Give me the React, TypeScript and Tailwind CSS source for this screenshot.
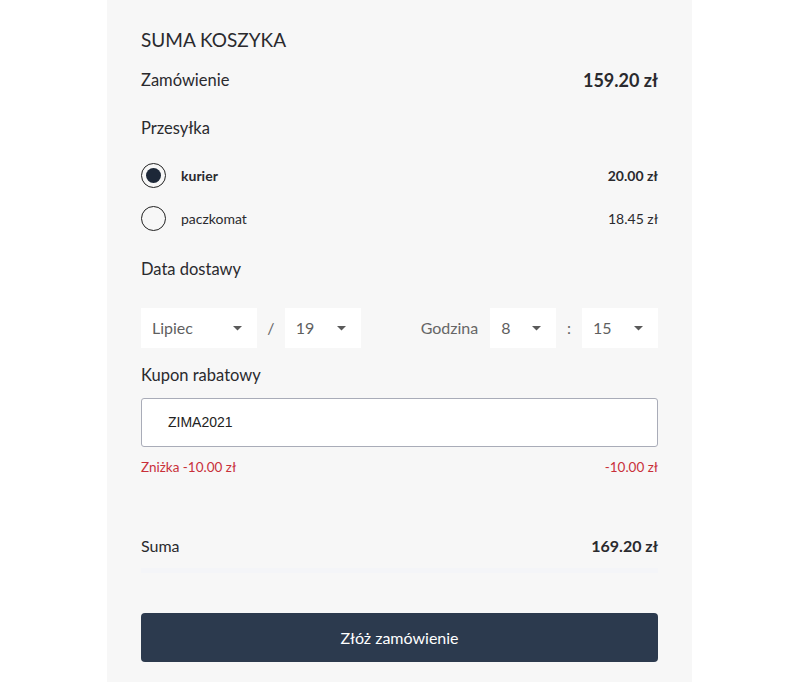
import { useState } from "react";

/* ─── Small caret for the fake selects ─── */
function Caret() {
  return (
    <svg width="9" height="5" viewBox="0 0 9 5" className="shrink-0">
      <path d="M0 0 L9 0 L4.5 4.5 Z" fill="#5a5a5a" />
    </svg>
  );
}

function SelectBox({ value, width }: { value: string; width: string }) {
  return (
    <div className={`flex h-10 items-center justify-between bg-white pl-[11px] pr-[15px] ${width}`}>
      <span className="text-[16px] text-[#5f5f5f]">{value}</span>
      <Caret />
    </div>
  );
}

function Radio({ checked }: { checked: boolean }) {
  return (
    <span className="flex h-[25px] w-[25px] items-center justify-center rounded-full border-[1.5px] border-[#222]">
      {checked && <span className="h-[15px] w-[15px] rounded-full bg-[#1d2838]" />}
    </span>
  );
}

export default function App() {
  const [shipping, setShipping] = useState<"kurier" | "paczkomat">("kurier");

  const options = [
    { id: "kurier" as const, label: "kurier", price: "20.00 zł" },
    { id: "paczkomat" as const, label: "paczkomat", price: "18.45 zł" },
  ];

  return (
    <div className="min-h-[682px] bg-white" style={{ fontFamily: "Lato, 'Noto Sans', sans-serif" }}>
      <div className="ml-[107px] flex min-h-[682px] w-[585px] flex-col bg-[#f7f7f7] px-[34px] pt-[28px] text-[#2a2a2e]">
        <h2 className="text-[19px] leading-6 uppercase">Suma koszyka</h2>

        <div className="mt-[15px] flex items-center justify-between">
          <span className="text-[16.5px]">Zamówienie</span>
          <span className="text-[18px] font-bold">159.20 zł</span>
        </div>

        <div className="mt-[22px] text-[16.5px] leading-6">Przesyłka</div>

        <div className="mt-[23px] flex flex-col gap-[18px]">
          {options.map((o) => (
            <label
              key={o.id}
              className="flex cursor-pointer items-center justify-between"
              onClick={() => setShipping(o.id)}
            >
              <span className="flex items-center gap-[15px]">
                <Radio checked={shipping === o.id} />
                <span className={`text-[14px] ${shipping === o.id ? "font-bold" : ""}`}>{o.label}</span>
              </span>
              <span className={`text-[14px] ${shipping === o.id ? "font-bold" : ""}`}>{o.price}</span>
            </label>
          ))}
        </div>

        <div className="mt-[26px] text-[16.5px] leading-6">Data dostawy</div>

        <div className="mt-[27px] flex items-center">
          <SelectBox value="Lipiec" width="w-[116px]" />
          <span className="w-[28px] text-center text-[16px] text-[#666]">/</span>
          <SelectBox value="19" width="w-[76px]" />
          <span className="ml-[60px] mr-[12px] text-[16px] text-[#666]">Godzina</span>
          <SelectBox value="8" width="w-[66px]" />
          <span className="w-[26px] text-center text-[16px] text-[#666]">:</span>
          <SelectBox value="15" width="w-[76px]" />
        </div>

        <div className="mt-[15px] text-[16.5px] leading-6">Kupon rabatowy</div>

        <div className="mt-[11px] flex h-[49px] items-center rounded-[3px] border border-[#a9acb8] bg-white pl-[26px]">
          <span className="text-[14px] text-[#222]" style={{ fontFamily: "'Liberation Sans', Arial, sans-serif" }}>
            ZIMA2021
          </span>
        </div>

        <div className="mt-[10px] flex items-center justify-between text-[13.5px] text-[#c9303a]">
          <span>Zniżka -10.00 zł</span>
          <span>-10.00 zł</span>
        </div>

        <div className="mt-[57px] flex items-center justify-between border-b-[5px] border-[#f4f5f8] pb-[10px]">
          <span className="text-[16px]">Suma</span>
          <span className="text-[16px] font-bold">169.20 zł</span>
        </div>

        <button
          type="button"
          className="mt-[40px] h-[49px] w-full rounded-[4px] bg-[#2c3a4e] text-[16px] text-white"
        >
          Złóż zamówienie
        </button>
      </div>
    </div>
  );
}
